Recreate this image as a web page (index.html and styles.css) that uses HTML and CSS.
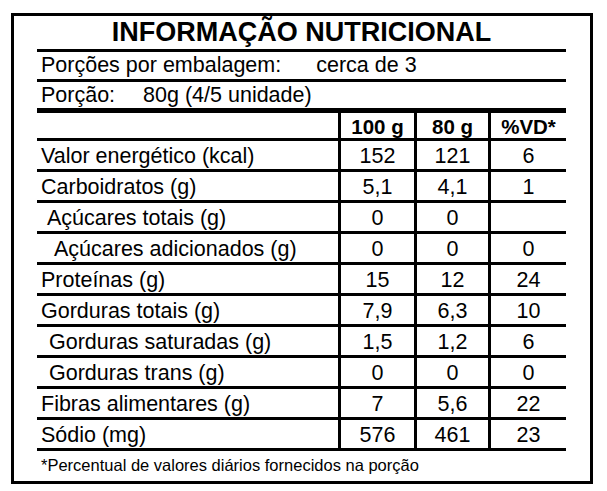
FILE: index.html
```html
<!DOCTYPE html>
<html lang="pt-BR">
<head>
<meta charset="utf-8">
<title>Informação Nutricional</title>
<link rel="stylesheet" href="styles.css">
</head>
<body>
<div class="label">
  <h1 class="title">INFORMAÇÃO NUTRICIONAL</h1>
  <div class="info info-first"><span>Porções por embalagem:</span><span class="info-val1">cerca de 3</span></div>
  <div class="info info-second"><span>Porção:</span><span class="info-val2">80g (4/5 unidade)</span></div>
  <div class="table">
    <div class="cell head"></div>
    <div class="cell head num">100 g</div>
    <div class="cell head num">80 g</div>
    <div class="cell head num">%VD*</div>

    <div class="cell name">Valor energético (kcal)</div>
    <div class="cell num">152</div><div class="cell num">121</div><div class="cell num">6</div>

    <div class="cell name">Carboidratos (g)</div>
    <div class="cell num">5,1</div><div class="cell num">4,1</div><div class="cell num">1</div>

    <div class="cell name ind1">Açúcares totais (g)</div>
    <div class="cell num">0</div><div class="cell num">0</div><div class="cell num"></div>

    <div class="cell name ind2">Açúcares adicionados (g)</div>
    <div class="cell num">0</div><div class="cell num">0</div><div class="cell num">0</div>

    <div class="cell name">Proteínas (g)</div>
    <div class="cell num">15</div><div class="cell num">12</div><div class="cell num">24</div>

    <div class="cell name">Gorduras totais (g)</div>
    <div class="cell num">7,9</div><div class="cell num">6,3</div><div class="cell num">10</div>

    <div class="cell name ind1b">Gorduras saturadas (g)</div>
    <div class="cell num">1,5</div><div class="cell num">1,2</div><div class="cell num">6</div>

    <div class="cell name ind1b">Gorduras trans (g)</div>
    <div class="cell num">0</div><div class="cell num">0</div><div class="cell num">0</div>

    <div class="cell name">Fibras alimentares (g)</div>
    <div class="cell num">7</div><div class="cell num">5,6</div><div class="cell num">22</div>

    <div class="cell name">Sódio (mg)</div>
    <div class="cell num">576</div><div class="cell num">461</div><div class="cell num">23</div>
  </div>
  <p class="foot">*Percentual de valores diários fornecidos na porção</p>
</div>
</body>
</html>
```

FILE: styles.css
```css
html, body {
  margin: 0;
  padding: 0;
  background: #fff;
}

body {
  font-family: "Liberation Sans", Arial, sans-serif;
  color: #000;
}

.label {
  box-sizing: border-box;
  width: 582px;
  height: 471px;
  margin: 13px 0 0 11px;
  border: 3px solid #000;
  padding: 0 24px 0 23px;
}

.title {
  margin: 0;
  height: 33px;
  border-bottom: 3px solid #000;
  font-size: 27px;
  font-weight: bold;
  line-height: 33px;
  text-align: center;
}

.info {
  display: flex;
  font-size: 21.5px;
  padding-left: 4px;
}

.info-first {
  height: 27px;
  line-height: 27px;
  border-bottom: 3px solid #000;
}

.info-second {
  height: 26px;
  line-height: 26px;
  border-bottom: 5px solid #000;
}

.info-val1 {
  margin-left: 35px;
}

.info-val2 {
  margin-left: 28px;
}

.table {
  display: grid;
  grid-template-columns: 301px 76px 74px 78px;
}

.cell {
  height: 28px;
  line-height: 30px;
  font-size: 21.5px;
  border-bottom: 3px solid #000;
  white-space: nowrap;
}

.cell.head {
  height: 25px;
  line-height: 27px;
  font-weight: bold;
  font-size: 20.5px;
}

.num {
  border-left: 3px solid #000;
  text-align: center;
}

.name {
  padding-left: 4px;
}

.ind1 {
  padding-left: 10px;
}

.ind2 {
  padding-left: 17px;
}

.ind1b {
  padding-left: 12px;
}

.foot {
  margin: 0;
  height: 30px;
  line-height: 28px;
  font-size: 16.5px;
  padding-left: 4px;
}
```
